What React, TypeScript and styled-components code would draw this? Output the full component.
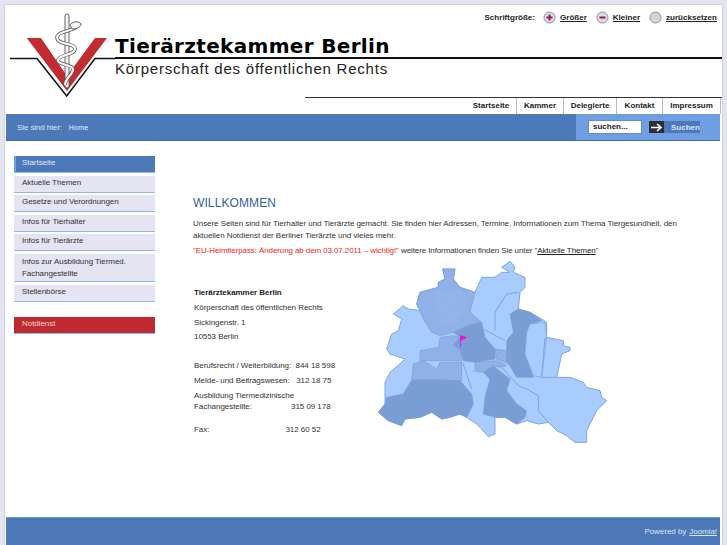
import React from "react";
import styled, { createGlobalStyle } from "styled-components";

const Global = createGlobalStyle`
  html, body { margin: 0; padding: 0; height: 100%; background: #e4e4f2; overflow: hidden; }
  body { font-family: "Liberation Sans", Arial, sans-serif; color: #222; }
  #root { height: 100%; }
`;

const Page = styled.div`
  box-sizing: border-box;
  margin: 4px 4px 0 4px;
  height: 541px;
  background: #fff;
  border-left: 1px solid #d3d3e6;
  border-top: 1px solid #d3d3e6;
  border-right: 1px solid #d3d3e6;
  display: flex;
  flex-direction: column;
`;

const Header = styled.header`
  height: 91px;
  flex: none;
  display: flex;
  flex-direction: column;
`;

const FontBar = styled.div`
  height: 15px;
  padding: 5px 5px 0 0;
  display: flex;
  justify-content: flex-end;
  align-items: center;
  font-size: 8px;
  font-weight: bold;
  letter-spacing: 0.02px;
  color: #222;
`;
const FontLabel = styled.span`
  margin-right: 8px;
`;
const FontLink = styled.a`
  color: #222;
  text-decoration: underline;
  margin: 0 9px 0 4px;
  &:last-child { margin-right: 0; }
`;

const LogoRow = styled.div`
  display: flex;
  height: 72px;
  margin-top: -5px;
  padding-left: 5px;
`;
const LogoMark = styled.svg`
  width: 105px;
  height: 96px;
  flex: none;
  margin-top: -16px;
`;
const LogoText = styled.div`
  flex: 1;
  display: flex;
  flex-direction: column;
  padding-top: 15px;
`;
const LogoTitle = styled.div`
  height: 22px;
  font-family: "DejaVu Sans", sans-serif;
  font-size: 20px;
  line-height: 22px;
  font-weight: bold;
  letter-spacing: 0.33px;
  color: #000;
`;
const LogoRule = styled.div`
  height: 2px;
  background: #111;
`;
const LogoSub = styled.div`
  font-size: 15px;
  line-height: 15px;
  margin-top: 2px;
  letter-spacing: 0.78px;
  color: #222;
`;

const NavArea = styled.div`
  height: 16px;
  flex: none;
  margin-top: 1px;
  margin-left: 300px;
  border-top: 1px solid #333;
  display: flex;
  justify-content: flex-end;
  padding-right: 1px;
`;
const NavTab = styled.a<{ $w: number }>`
  box-sizing: border-box;
  width: ${(p) => p.$w}px;
  height: 16px;
  border-right: 1px solid #bbb;
  background: #fff;
  font-size: 8px;
  font-weight: bold;
  line-height: 15px;
  text-align: center;
  color: #222;
`;

const Bar = styled.div`
  margin: 0 2px 0 1px;
  height: 27px;
  flex: none;
  background: #4d79b9;
  border-bottom: 1px solid #3f6aaa;
  box-sizing: border-box;
  display: flex;
  align-items: center;
  justify-content: space-between;
`;
const Crumbs = styled.div`
  padding-left: 11px;
  display: flex;
  align-items: center;
  color: #dfe8f6;
  font-size: 8px;
  letter-spacing: -0.1px;
`;
const CrumbHome = styled.span`
  font-size: 7px;
  margin-left: 7px;
  color: #eef3fb;
  letter-spacing: 0.2px;
`;
const SearchBox = styled.div`
  width: 144px;
  height: 100%;
  background: #6f9fe2;
  display: flex;
  align-items: center;
  padding-left: 12px;
  box-sizing: border-box;
`;
const SearchInput = styled.div`
  box-sizing: border-box;
  width: 54px;
  height: 14px;
  background: #fff;
  border: 1px solid #5d8ed6;
  font-size: 8px;
  font-weight: bold;
  line-height: 11px;
  padding-left: 4px;
  color: #222;
`;
const SearchButton = styled.div`
  margin-left: 7px;
  width: 51px;
  height: 12px;
  background: #4d79b9;
  display: flex;
  align-items: center;
  font-size: 8px;
  font-weight: bold;
  color: #dbe6f7;
`;
const ArrowBox = styled.span`
  width: 15px;
  height: 12px;
  background: #2f2f33;
  margin-right: 7px;
  display: flex;
  align-items: center;
  justify-content: center;
`;

const Body = styled.div`
  flex: 1;
  display: flex;
  min-height: 0;
`;
const Side = styled.nav`
  width: 141px;
  margin: 15px 0 0 9px;
  flex: none;
  display: flex;
  flex-direction: column;
  gap: 2.6px;
`;
const SideItem = styled.a<{ $active?: boolean }>`
  box-sizing: border-box;
  display: block;
  padding: 1px 6px 0 8px;
  min-height: 17px;
  font-size: 8px;
  line-height: 12px;
  letter-spacing: -0.05px;
  background: ${(p) => (p.$active ? "#4d79b9" : "#e4e4f2")};
  color: ${(p) => (p.$active ? "#dfe8f6" : "#333")};
  border-bottom: 1px solid #90b6ee;
  ${(p) => (p.$active ? "border-left: 2px solid #6f9fe2; padding-left: 6px;" : "")}
`;
const TwoLine = styled(SideItem)`
  padding-top: 2px;
  padding-bottom: 1px;
`;
const EmergencyItem = styled(SideItem)`
  margin-top: 13px;
  background: #c02a2e;
  color: #f2d6d6;
`;

const Main = styled.main`
  flex: 1;
  padding: 55px 0 0 38px;
  min-width: 0;
`;
const Title = styled.h1`
  margin: 0 0 8px;
  font-size: 12px;
  line-height: 14px;
  font-weight: normal;
  letter-spacing: 0.1px;
  color: #336199;
`;
const Para = styled.p<{ $spacing: number }>`
  margin: 0 0 3px;
  font-size: 8px;
  line-height: 12px;
  letter-spacing: ${(p) => p.$spacing}px;
  color: #333;
  width: 490px;
`;
const Red = styled.span`
  color: #f01c1c;
`;
const Under = styled.a`
  color: #222;
  text-decoration: underline;
`;
const Lower = styled.div`
  display: flex;
  margin-top: 14px;
`;
const Address = styled.div`
  width: 184px;
  padding-left: 1px;
  padding-top: 15px;
  flex: none;
`;
const Line = styled.div<{ $gap?: number }>`
  font-size: 8px;
  line-height: 14.8px;
  letter-spacing: -0.05px;
  color: #333;
  white-space: pre;
  margin-top: ${(p) => p.$gap ?? 0}px;
`;
const TightLine = styled(Line)`
  line-height: 11.5px;
`;
const Bold = styled(Line)`
  font-weight: bold;
  color: #222;
`;
const MapSvg = styled.svg`
  width: 245px;
  height: 190px;
  flex: none;
  margin-left: -8px;
  margin-top: -17px;
  filter: blur(0.35px);
`;

const Footer = styled.footer`
  margin: 0 2px 0 1px;
  height: 28px;
  flex: none;
  background: #4d79b9;
  border-top: 1px solid #6f97cf;
  box-sizing: border-box;
  display: flex;
  align-items: center;
  justify-content: flex-end;
  padding-right: 3px;
  color: #dbe5f5;
  font-size: 8px;
  letter-spacing: -0.04px;
`;
const FooterLink = styled.a`
  color: #dbe5f5;
  text-decoration: underline;
  margin-left: 3px;
`;

const SizeIcon = ({ kind }: { kind: "plus" | "minus" | "reset" }) => (
  <svg width="13" height="13" viewBox="0 0 13 13" style={{ flex: "none" }}>
    <circle cx="6.5" cy="6.5" r="5.5" fill={kind === "reset" ? "#d4d4d4" : "#dcdce6"} stroke="#888" strokeWidth="0.9" />
    {kind !== "reset" && <rect x="3.5" y="5.5" width="6" height="2" fill="#a01860" />}
    {kind === "plus" && <rect x="5.5" y="3.5" width="2" height="6" fill="#a01860" />}
  </svg>
);

const snake =
  "M66 21C68 25 60 25 57 27C50 29 45 31 48 36C51 41 65 39 65 45C65 51 50 50 48 56C47 61 62 60 63 65C63 71 55 74 55 81";

const Mark = () => (
  <LogoMark viewBox="0 0 105 96">
    <path d="M16.7 34H31L57 72L85 34H97L57 87Z" fill="#c22c30" />
    <path d="M0 54.5H27L56.7 92L85 54.5H105" fill="none" stroke="#111" strokeWidth="1.5" />
    <rect x="55" y="10" width="4" height="74" rx="2" fill="#f4f4f4" stroke="#555" strokeWidth="0.9" />
    <path d={snake} fill="none" stroke="#555" strokeWidth="3.6" />
    <path d={snake} fill="none" stroke="#f6f6f6" strokeWidth="2.2" />
    <path d="M60 21C62 17 70 17 71 20C71 24 65 25 62 25Z" fill="#f6f6f6" stroke="#555" strokeWidth="0.9" />
  </LogoMark>
);

const L = "#a9ccff";
const M = "#8fb1e8";
const D = "#7b9dd6";
const E = "#7ea3dd";

const BerlinMap = () => (
  <MapSvg viewBox="0 0 735 570">
    <defs>
      <pattern id="dots" width="10" height="10" patternUnits="userSpaceOnUse">
        <rect x="1" y="1" width="3" height="3" fill="#a9ccff" />
        <rect x="6" y="6" width="3" height="3" fill="#a9ccff" />
      </pattern>
    </defs>
    <g stroke={E} strokeWidth="3" strokeLinejoin="round">
      <path
        fill={L}
        d="M218 45L255 45L250 75L270 100L315 115L335 70L375 70L395 55L420 55L395 40L420 22L435 40L430 55L465 70L465 100L450 115L445 165L480 175L515 195L530 205L530 250L580 260L580 275L600 280L600 290L575 300L570 325L560 370L600 370L640 385L650 400L690 410L695 430L710 440L680 470L665 500L650 530L650 565L615 565L590 545L560 530L535 505L505 510L470 500L440 510L405 490L375 490L375 540L355 548L330 520L320 510L290 490L270 480L240 490L215 495L185 475L150 490L105 495L95 515L55 500L25 475L45 450L45 385L60 355L95 325L105 315L60 300L50 285L65 240L85 230L95 195L70 180L100 155L115 165L150 170L140 150L150 115L205 100L205 85L225 75Z"
      />
    </g>
    <g stroke={D} strokeWidth="2" strokeLinejoin="round">
      <path fill={M} d="M150 115L205 100L205 85L225 75L218 45L255 45L250 75L270 100L315 115L300 175L335 205L295 215L250 235L210 245L185 235L160 195L140 150Z" />
      <path fill="url(#dots)" stroke="none" opacity="0.55" d="M190 110L265 105L295 130L285 175L250 215L215 220Z" />
      <path fill={M} d="M210 250L250 245L270 250L250 275L270 285L275 320L150 320L150 290L205 280Z" />
      <path fill={M} d="M130 330L160 320L200 345L210 325L275 325L275 380L200 378L125 378Z" />
      <path fill={D} d="M125 378L200 378L270 380L305 420L310 450L290 490L270 480L240 490L215 495L185 475L150 490L105 495L95 515L55 500L25 475L45 450L50 430L100 420Z" />
      <path fill={D} d="M250 235L295 215L335 205L345 250L375 285L375 315L315 325L280 320L270 285L250 275L270 250Z" />
      <path fill={D} d="M340 355L370 335L400 360L420 375L410 410L440 450L470 470L465 490L440 510L405 490L375 490L340 480L345 430L360 375Z" />
      <path fill={M} d="M315 325L380 320L410 335L390 340L370 335L340 355L315 345Z" />
      <path fill={M} d="M375 285L410 290L415 330L380 315Z" />
      <path fill={D} d="M420 180L445 165L480 175L515 200L480 210L470 235L465 300L490 370L440 370L410 320L410 260L430 235Z" />
      <path fill={L} d="M480 210L525 205L530 250L515 370L490 365L465 300L470 235Z" />
    </g>
    <g fill="none" stroke={E} strokeWidth="3" strokeLinejoin="round">
      <path d="M340 225L405 260M375 230L375 175L410 120L445 115" />
      <path d="M395 340L445 395L470 405L505 425L505 470L535 505" />
      <path d="M278 325L305 405M310 350L335 355" />
      <path d="M525 250L515 370L560 370" />
    </g>
    <path d="M272 278V244" stroke="#f010d8" strokeWidth="3" />
    <path d="M272 243L292 251L272 260Z" fill="#f010d8" />
  </MapSvg>
);

export default function App() {
  return (
    <>
      <Global />
      <Page>
        <Header>
          <FontBar>
            <FontLabel>Schriftgröße:</FontLabel>
            <SizeIcon kind="plus" />
            <FontLink>Größer</FontLink>
            <SizeIcon kind="minus" />
            <FontLink>Kleiner</FontLink>
            <SizeIcon kind="reset" />
            <FontLink>zurücksetzen</FontLink>
          </FontBar>
          <LogoRow>
            <Mark />
            <LogoText>
              <LogoTitle>Tierärztekammer Berlin</LogoTitle>
              <LogoRule />
              <LogoSub>Körperschaft des öffentlichen Rechts</LogoSub>
            </LogoText>
          </LogoRow>
        </Header>
        <NavArea>
          <NavTab $w={51}>Startseite</NavTab>
          <NavTab $w={47}>Kammer</NavTab>
          <NavTab $w={53}>Delegierte</NavTab>
          <NavTab $w={46}>Kontakt</NavTab>
          <NavTab $w={58}>Impressum</NavTab>
        </NavArea>
        <Bar>
          <Crumbs>
            Sie sind hier:
            <CrumbHome>Home</CrumbHome>
          </Crumbs>
          <SearchBox>
            <SearchInput>suchen...</SearchInput>
            <SearchButton>
              <ArrowBox>
                <svg width="11" height="9" viewBox="0 0 11 9">
                  <path d="M0 4.5H9M6 1L10 4.5L6 8" fill="none" stroke="#fff" strokeWidth="1.6" />
                </svg>
              </ArrowBox>
              Suchen
            </SearchButton>
          </SearchBox>
        </Bar>
        <Body>
          <Side>
            <SideItem $active>Startseite</SideItem>
            <SideItem>Aktuelle Themen</SideItem>
            <SideItem>Gesetze und Verordnungen</SideItem>
            <SideItem>Infos für Tierhalter</SideItem>
            <SideItem>Infos für Tierärzte</SideItem>
            <TwoLine>
              Infos zur Ausbildung Tiermed.
              <br />
              Fachangestellte
            </TwoLine>
            <SideItem>Stellenbörse</SideItem>
            <EmergencyItem>Notdienst</EmergencyItem>
          </Side>
          <Main>
            <Title>WILLKOMMEN</Title>
            <Para $spacing={-0.05}>
              Unsere Seiten sind für Tierhalter und Tierärzte gemacht. Sie finden hier Adressen, Termine, Informationen zum Thema Tiergesundheit, den aktuellen Notdienst der Berliner Tierärzte und vieles mehr.
            </Para>
            <Para $spacing={-0.1}>
              <Red>"EU-Heimtierpass: Änderung ab dem 03.07.2011 – wichtig!"</Red> weitere Informationen finden Sie unter "<Under>Aktuelle Themen</Under>"
            </Para>
            <Lower>
              <Address>
                <Bold>Tierärztekammer Berlin</Bold>
                <Line>Körperschaft des öffentlichen Rechts</Line>
                <Line>Sickingenstr. 1</Line>
                <Line>10553 Berlin</Line>
                <Line $gap={14}>Berufsrecht / Weiterbildung:  844 18 598</Line>
                <Line>Melde- und Beitragswesen:   312 18 75</Line>
                <TightLine $gap={1}>Ausbildung Tiermedizinische</TightLine>
                <TightLine>{"Fachangestellte:                  315 09 178"}</TightLine>
                <Line $gap={10}>{"Fax:                                   312 60 52"}</Line>
              </Address>
              <BerlinMap />
            </Lower>
          </Main>
        </Body>
        <Footer>
          Powered by <FooterLink>Joomla!</FooterLink>
        </Footer>
      </Page>
    </>
  );
}
